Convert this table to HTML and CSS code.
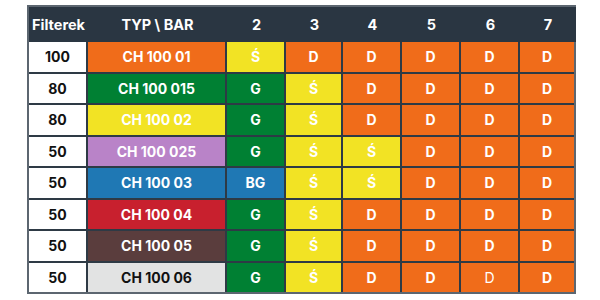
FILE: index.html
```html
<!DOCTYPE html>
<html lang="pl">
<head>
<meta charset="utf-8">
<link rel="stylesheet" href="styles.css">
</head>
<body>
<div class="table">
  <div class="h">Filterek</div><div class="h">TYP \ BAR</div><div class="h">2</div><div class="h">3</div><div class="h">4</div><div class="h">5</div><div class="h">6</div><div class="h">7</div>

  <div class="c w">100</div><div class="c o">CH 100 01</div><div class="c y">Ś</div><div class="c o">D</div><div class="c o">D</div><div class="c o">D</div><div class="c o">D</div><div class="c o">D</div>
  <div class="c w">80</div><div class="c g">CH 100 015</div><div class="c g">G</div><div class="c y">Ś</div><div class="c o">D</div><div class="c o">D</div><div class="c o">D</div><div class="c o">D</div>
  <div class="c w">80</div><div class="c y">CH 100 02</div><div class="c g">G</div><div class="c y">Ś</div><div class="c o">D</div><div class="c o">D</div><div class="c o">D</div><div class="c o">D</div>
  <div class="c w">50</div><div class="c p">CH 100 025</div><div class="c g">G</div><div class="c y">Ś</div><div class="c y">Ś</div><div class="c o">D</div><div class="c o">D</div><div class="c o">D</div>
  <div class="c w">50</div><div class="c b">CH 100 03</div><div class="c b">BG</div><div class="c y">Ś</div><div class="c y">Ś</div><div class="c o">D</div><div class="c o">D</div><div class="c o">D</div>
  <div class="c w">50</div><div class="c r">CH 100 04</div><div class="c g">G</div><div class="c y">Ś</div><div class="c o">D</div><div class="c o">D</div><div class="c o">D</div><div class="c o">D</div>
  <div class="c w">50</div><div class="c br">CH 100 05</div><div class="c g">G</div><div class="c y">Ś</div><div class="c o">D</div><div class="c o">D</div><div class="c o">D</div><div class="c o">D</div>
  <div class="c w">50</div><div class="c l">CH 100 06</div><div class="c g">G</div><div class="c y">Ś</div><div class="c o">D</div><div class="c o">D</div><div class="c o thin">D</div><div class="c o">D</div>
</div>
</body>
</html>
```

FILE: styles.css
```css
html, body {
  margin: 0;
  padding: 0;
  background: #ffffff;
}
body {
  font-family: "Inter", "Open Sans", sans-serif;
  padding: 5px 0 0 27px;
}
.table {
  box-sizing: border-box;
  width: 549px;
  height: 289px;
  border: 2px solid #5c6670;
  background: #2e3a45;
  display: grid;
  grid-template-columns: 57px 137px 57px 55px 57px 57px 57px 54px;
  grid-template-rows: 33px repeat(8, 1fr);
  column-gap: 2px;
  row-gap: 2px;
}
.h {
  background: #2a3642;
  color: #ffffff;
  font-weight: 700;
  font-size: 14.5px;
  display: flex;
  align-items: center;
  justify-content: center;
  margin-right: -2px;
  margin-bottom: -2px;
}
.c {
  display: flex;
  align-items: center;
  justify-content: center;
  font-weight: 700;
  font-size: 14px;
  color: #ffffff;
}
.w { background: #ffffff; color: #111111; }
.o { background: #f06c1a; }
.y { background: #f2e324; }
.g { background: #008033; }
.p { background: #b983c8; }
.b { background: #1f78b4; }
.r { background: #c8202e; }
.br { background: #5a3d3d; }
.l { background: #e2e3e3; color: #111111; }
.thin { font-weight: 400; }
```
